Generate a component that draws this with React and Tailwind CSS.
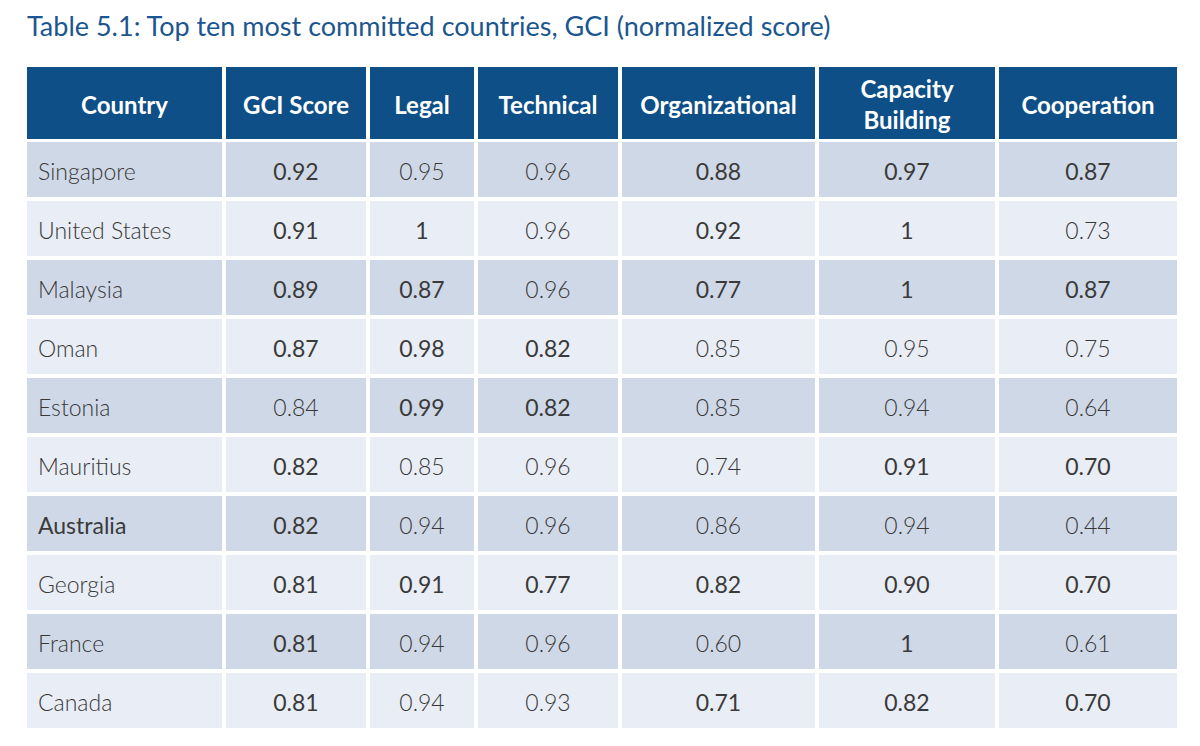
import React from "react";

const D = true;
const L = false;

const rows = [
  ["Singapore", L, [["0.92", D], ["0.95", L], ["0.96", L], ["0.88", D], ["0.97", D], ["0.87", D]]],
  ["United States", L, [["0.91", D], ["1", D], ["0.96", L], ["0.92", D], ["1", D], ["0.73", L]]],
  ["Malaysia", L, [["0.89", D], ["0.87", D], ["0.96", L], ["0.77", D], ["1", D], ["0.87", D]]],
  ["Oman", L, [["0.87", D], ["0.98", D], ["0.82", D], ["0.85", L], ["0.95", L], ["0.75", L]]],
  ["Estonia", L, [["0.84", L], ["0.99", D], ["0.82", D], ["0.85", L], ["0.94", L], ["0.64", L]]],
  ["Mauritius", L, [["0.82", D], ["0.85", L], ["0.96", L], ["0.74", L], ["0.91", D], ["0.70", D]]],
  ["Australia", D, [["0.82", D], ["0.94", L], ["0.96", L], ["0.86", L], ["0.94", L], ["0.44", L]]],
  ["Georgia", L, [["0.81", D], ["0.91", D], ["0.77", D], ["0.82", D], ["0.90", D], ["0.70", D]]],
  ["France", L, [["0.81", D], ["0.94", L], ["0.96", L], ["0.60", L], ["1", D], ["0.61", L]]],
  ["Canada", L, [["0.81", D], ["0.94", L], ["0.93", L], ["0.71", D], ["0.82", D], ["0.70", D]]],
];

const headers = ["Country", "GCI Score", "Legal", "Technical", "Organizational", "Capacity Building", "Cooperation"];

export default function App() {
  return (
    <div
      className="w-[1200px] h-[746px] bg-white overflow-hidden pl-[27px] pt-[8px]"
      style={{ fontFamily: "Lato, 'Open Sans', sans-serif" }}
    >
      <h1 className="text-[27px] leading-[36px] text-[#1b5690] font-normal">
        Table 5.1: Top ten most committed countries, GCI (normalized score)
      </h1>
      <div className="mt-[23px] grid grid-cols-[195px_140px_104px_140px_193px_176px_178px] gap-x-[4px] gap-y-[4px] w-[1150px]">
        {headers.map((h) => (
          <div
            key={h}
            className="h-[72px] mb-[-1px] bg-[#0e4f88] text-white font-bold text-[24px] leading-[31px] flex items-center justify-center text-center px-1 pt-[2px]"
          >
            {h === "Capacity Building" ? (
              <span>
                Capacity
                <br />
                Building
              </span>
            ) : (
              h
            )}
          </div>
        ))}
        {rows.map(([name, nd, vals], i) => {
          const bg = i % 2 === 0 ? "bg-[#cfd8e7]" : "bg-[#e9edf5]";
          return (
            <React.Fragment key={name}>
              <div
                className={`${bg} h-[55px] flex items-center pl-[11px] pt-[3px] text-[23px] ${
                  nd ? "font-normal text-[#3a3a3a]" : "font-light text-[#383838]"
                }`}
              >
                {name}
              </div>
              {vals.map(([v, d], j) => (
                <div
                  key={j}
                  className={`${bg} h-[55px] flex items-center justify-center pt-[3px] text-[23px] ${
                    d ? "font-normal text-[#3a3a3a]" : "font-light text-[#383838]"
                  }`}
                >
                  {v}
                </div>
              ))}
            </React.Fragment>
          );
        })}
      </div>
    </div>
  );
}
